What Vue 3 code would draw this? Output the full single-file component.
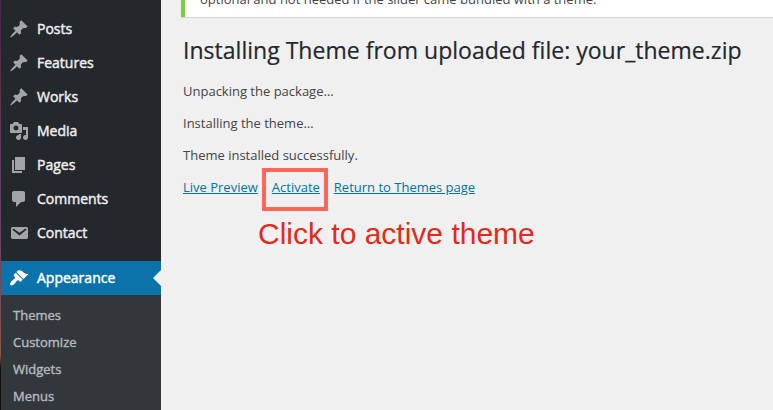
<script setup>
const icons = {
  pin: 'M10.44 3.02l1.82-1.82 6.36 6.35-1.83 1.82c-1.05-.68-2.48-.57-3.41.36l-.75.75c-.92.93-1.04 2.35-.35 3.41l-1.83 1.82-2.41-2.41-2.8 2.79c-.42.42-3.38 2.71-3.8 2.29s1.86-3.39 2.28-3.81l2.79-2.79L4.1 9.36l1.83-1.82c1.05.69 2.48.57 3.4-.36l.75-.75c.93-.92 1.05-2.35.36-3.41z',
  media: 'M13 11V4c0-.55-.45-1-1-1h-1.67L9 1H5L3.67 3H2c-.55 0-1 .45-1 1v7c0 .55.45 1 1 1h10c.55 0 1-.45 1-1zM7 4.5c1.38 0 2.5 1.12 2.5 2.5S8.38 9.5 7 9.5 4.5 8.38 4.5 7 5.62 4.5 7 4.5zM14 6h5v10.5c0 1.38-1.12 2.5-2.5 2.5S14 17.88 14 16.5s1.12-2.5 2.5-2.5c.17 0 .34.02.5.05V9h-3V6zm-4 8.05V13h2v3.5c0 1.38-1.12 2.5-2.5 2.5S7 17.88 7 16.5 8.12 14 9.5 14c.17 0 .34.02.5.05z',
  pages: 'M6 15V2h10v13H6zm-1 1h8v2H3V5h2v11z',
  comments: 'M5 2h9c1.1 0 2 .9 2 2v7c0 1.1-.9 2-2 2h-2l-5 5v-5H5c-1.1 0-2-.9-2-2V4c0-1.1.9-2 2-2z',
  mail: 'M3.87 4h13.25C18.37 4 19 4.59 19 5.79v8.42c0 1.19-.63 1.79-1.88 1.79H3.87c-1.25 0-1.88-.6-1.88-1.79V5.79c0-1.2.63-1.79 1.88-1.79zm6.62 8.6l6.74-5.53c.24-.2.43-.66.13-1.07-.29-.41-.82-.42-1.17-.17l-5.7 3.86L4.8 5.83c-.35-.25-.88-.24-1.17.17-.3.41-.11.87.13 1.07z',
  brush: 'M14.48 11.06L7.41 3.99l1.5-1.5c.5-.56 2.3-.47 3.51.32 1.21.8 1.43 1.28 2.91 2.1 1.18.64 2.45 1.26 4.45.85zm-.71.71L6.7 4.7 4.93 6.47c-.39.39-.39 1.02 0 1.41l1.06 1.06c.39.39.39 1.03 0 1.42-.6.6-1.43 1.11-2.21 1.69-.35.26-.7.53-1.01.84C1.43 14.23.4 16.08 1.4 17.07c.99 1 2.84-.03 4.18-1.36.31-.31.58-.66.85-1.02.57-.78 1.08-1.61 1.69-2.21.39-.39 1.02-.39 1.41 0l1.06 1.06c.39.39 1.02.39 1.41 0z',
}

const menu = [
  { label: 'Posts', icon: 'pin' },
  { label: 'Features', icon: 'pin' },
  { label: 'Works', icon: 'pin' },
  { label: 'Media', icon: 'media' },
  { label: 'Pages', icon: 'pages' },
  { label: 'Comments', icon: 'comments' },
  { label: 'Contact', icon: 'mail' },
  { label: 'Appearance', icon: 'brush', active: true },
]
const submenu = ['Themes', 'Customize', 'Widgets', 'Menus']
</script>

<template>
  <div class="screen">
    <div class="edge"></div>
    <nav class="sidebar">
      <a v-for="item in menu" :key="item.label" class="item" :class="{ active: item.active }">
        <svg class="icon" viewBox="0 0 20 20"><path :d="icons[item.icon]" /></svg>
        <span>{{ item.label }}</span>
      </a>
      <div class="submenu">
        <a v-for="name in submenu" :key="name" class="subitem">{{ name }}</a>
      </div>
    </nav>
    <main class="content">
      <div class="notice">optional and not needed if the slider came bundled with a theme.</div>
      <h1>Installing Theme from uploaded file: your_theme.zip</h1>
      <p>Unpacking the package…</p>
      <p>Installing the theme…</p>
      <p>Theme installed successfully.</p>
      <div class="links">
        <a class="preview">Live Preview</a>
        <a class="activate">Activate</a>
        <a class="back">Return to Themes page</a>
        <div class="marker"></div>
      </div>
      <div class="hint">Click to active theme</div>
    </main>
  </div>
</template>

<style>
body {
  background: #f0f0f0;
}
</style>

<style scoped>
.screen {
  display: flex;
  width: 773px;
  height: 410px;
  overflow: hidden;
  background: #f0f0f0;
  font-family: "Open Sans", sans-serif;
  font-size: 13px;
  color: #444;
}
.edge {
  flex: none;
  width: 1px;
  background: linear-gradient(#43264a 0, #5b3347 90px, #5c3f64 180px, #71485c 280px, #8a5548 355px, #15100f 368px, #111 410px);
}
.sidebar {
  flex: none;
  display: flex;
  flex-direction: column;
  box-sizing: border-box;
  width: 160px;
  padding-top: 12px;
  background: #23282d;
}
.item {
  flex: none;
  display: flex;
  align-items: center;
  gap: 8px;
  height: 34px;
  padding-left: 8px;
  font-size: 14px;
  line-height: 18px;
  color: #eee;
  -webkit-text-stroke: 0.45px currentColor;
}
.icon {
  width: 20px;
  height: 20px;
  fill: #a0a5aa;
}
.active {
  position: relative;
  margin-top: 11px;
  background: #0c73aa;
  color: #fff;
}
.active .icon {
  fill: #fff;
}
.active::after {
  content: "";
  position: absolute;
  right: 0;
  top: 9px;
  border: 8px solid transparent;
  border-left: 0;
  border-right-color: #f0f0f0;
}
.submenu {
  flex: 1;
  display: flex;
  flex-direction: column;
  padding: 7px 0 0 12px;
  background: #32373c;
}
.subitem {
  flex: none;
  height: 27px;
  line-height: 27px;
  color: #b4b9be;
  -webkit-text-stroke: 0.4px currentColor;
}
.content {
  flex: 1;
  display: flex;
  flex-direction: column;
  min-width: 0;
  padding-left: 20px;
  white-space: nowrap;
}
.notice {
  flex: none;
  display: flex;
  align-items: flex-end;
  box-sizing: border-box;
  height: 17px;
  padding: 0 0 8px 15px;
  border-left: 4px solid #7ad03a;
  background: #fff;
  box-shadow: 0 1px 1px rgba(0, 0, 0, 0.1);
  line-height: 19px;
}
h1 {
  margin: 17px 0 0 2px;
  height: 33px;
  font-size: 23px;
  font-weight: 400;
  line-height: 33px;
  letter-spacing: 0.02px;
  color: #23282d;
  -webkit-text-stroke: 0.2px currentColor;
}
p {
  margin: 0 0 0 2px;
  height: 32px;
  line-height: 19px;
}
h1 + p {
  margin-top: 15px;
}
.links {
  position: relative;
  display: flex;
  height: 19px;
  margin-left: 2px;
  line-height: 19px;
}
.links a {
  color: #0073aa;
  text-decoration: underline;
}
.activate {
  margin-left: 14px;
}
.back {
  margin-left: 14px;
}
.marker {
  position: absolute;
  box-sizing: border-box;
  left: 79px;
  top: -10px;
  width: 66px;
  height: 43px;
  border: 4px solid #ff6659;
}
.hint {
  margin: 17px 0 0 77px;
  font-family: "Liberation Sans", Arial, sans-serif;
  font-size: 30px;
  line-height: 40px;
  color: #e32a19;
}
</style>
